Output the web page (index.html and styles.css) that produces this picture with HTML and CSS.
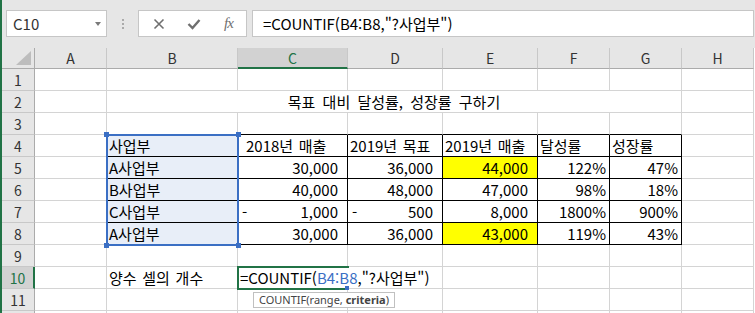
FILE: index.html
```html
<!DOCTYPE html>
<html lang="ko">
<head>
    <meta charset="UTF-8">
    <meta name="viewport" content="width=device-width, initial-scale=1.0">
    <title>COUNTIF</title>
    <link rel="stylesheet" href="styles.css">
</head>
<body>
<div class="app">
    <!-- formula bar -->
    <div class="formula-bar">
        <div class="name-box">
            <span>C10</span>
            <span class="caret"></span>
        </div>
        <div class="grip"><i></i><i></i><i></i></div>
        <div class="fx-buttons">
            <span class="fx-btn">
                <svg width="12" height="12" viewBox="0 0 12 12"><path d="M1.5 1.5 L10.5 10.5 M10.5 1.5 L1.5 10.5" stroke="#6f6f6f" stroke-width="1.6" fill="none"/></svg>
            </span>
            <span class="fx-btn">
                <svg width="14" height="12" viewBox="0 0 14 12"><path d="M1.5 6 L5.5 10 L12.5 2" stroke="#6f6f6f" stroke-width="2.4" fill="none"/></svg>
            </span>
            <span class="fx-btn fx-text">fx</span>
        </div>
        <div class="formula-input">=COUNTIF(B4:B8,"?사업부")</div>
    </div>

    <!-- sheet -->
    <div class="sheet">
        <div class="corner"><svg width="15" height="14" viewBox="0 0 15 14"><polygon points="15,0 15,14 0,14" fill="#bdbdbd"/></svg></div>
        <div class="hd">A</div>
        <div class="hd">B</div>
        <div class="hd hd-on">C</div>
        <div class="hd">D</div>
        <div class="hd">E</div>
        <div class="hd">F</div>
        <div class="hd">G</div>
        <div class="hd">H</div>

        <div class="rh">1</div>
        <div class="c"></div><div class="c"></div><div class="c"></div><div class="c"></div>
        <div class="c"></div><div class="c"></div><div class="c"></div><div class="c"></div>

        <div class="rh">2</div>
        <div class="c"></div>
        <div class="c title">목표 대비 달성률, 성장률 구하기</div>
        <div class="c"></div>

        <div class="rh">3</div>
        <div class="c"></div>
        <div class="c tt"></div><div class="c tt"></div><div class="c tt"></div>
        <div class="c tt"></div><div class="c tt"></div><div class="c tt"></div>
        <div class="c"></div>

        <div class="rh">4</div>
        <div class="c tl"></div>
        <div class="c t sel">사업부</div>
        <div class="c t indent">2018년 매출</div>
        <div class="c t">2019년 목표</div>
        <div class="c t">2019년 매출</div>
        <div class="c t">달성률</div>
        <div class="c t">성장률</div>
        <div class="c"></div>

        <div class="rh">5</div>
        <div class="c tl"></div>
        <div class="c t sel">A사업부</div>
        <div class="c t num">30,000</div>
        <div class="c t num">36,000</div>
        <div class="c t num hl">44,000</div>
        <div class="c t pct">122%</div>
        <div class="c t pct">47%</div>
        <div class="c"></div>

        <div class="rh">6</div>
        <div class="c tl"></div>
        <div class="c t sel">B사업부</div>
        <div class="c t num">40,000</div>
        <div class="c t num">48,000</div>
        <div class="c t num">47,000</div>
        <div class="c t pct">98%</div>
        <div class="c t pct">18%</div>
        <div class="c"></div>

        <div class="rh">7</div>
        <div class="c tl"></div>
        <div class="c t sel">C사업부</div>
        <div class="c t num acc"><span>-</span><span>1,000</span></div>
        <div class="c t num acc"><span>-</span><span>500</span></div>
        <div class="c t num">8,000</div>
        <div class="c t pct">1800%</div>
        <div class="c t pct">900%</div>
        <div class="c"></div>

        <div class="rh">8</div>
        <div class="c tl"></div>
        <div class="c t sel">A사업부</div>
        <div class="c t num">30,000</div>
        <div class="c t num">36,000</div>
        <div class="c t num hl">43,000</div>
        <div class="c t pct">119%</div>
        <div class="c t pct">43%</div>
        <div class="c"></div>

        <div class="rh">9</div>
        <div class="c"></div><div class="c"></div><div class="c"></div><div class="c"></div>
        <div class="c"></div><div class="c"></div><div class="c"></div><div class="c"></div>

        <div class="rh rh-on">10</div>
        <div class="c"></div>
        <div class="c">양수 셀의 개수</div>
        <div class="c editing">=COUNTIF(<span class="ref">B4:B8</span>,"?사업부")</div>
        <div class="c"></div><div class="c"></div><div class="c"></div><div class="c"></div><div class="c"></div>

        <div class="rh">11</div>
        <div class="c"></div><div class="c"></div><div class="c"></div><div class="c"></div>
        <div class="c"></div><div class="c"></div><div class="c"></div><div class="c"></div>

        <div class="rh"></div>
        <div class="c"></div><div class="c"></div><div class="c"></div><div class="c"></div>
        <div class="c"></div><div class="c"></div><div class="c"></div><div class="c"></div>

        <!-- overlays -->
        <div class="range">
            <i class="handle h-tl"></i><i class="handle h-tr"></i>
            <i class="handle h-bl"></i><i class="handle h-br"></i>
        </div>
        <div class="active"><i class="fill-handle"></i></div>
        <div class="tip">COUNTIF(range, <b>criteria</b>)</div>
    </div>
</div>
</body>
</html>
```

FILE: styles.css
```css
/* BODY */
body {
    margin: 0;
    font-family: "Noto Sans CJK KR", "Noto Sans", sans-serif;
    background-color: #fff;
}

.app {
    width: 753px;
    height: 313px;
    overflow: hidden;
    border-left: 2px solid #217346;
}

/* Formula bar */
.formula-bar {
    display: flex;
    align-items: flex-start;
    height: 48px;
    box-sizing: border-box;
    padding: 10px 1px 0 4px;
    background-color: #e6e6e6;
}
.name-box,
.fx-buttons,
.formula-input {
    height: 27px;
    box-sizing: border-box;
    border: 1px solid #c6c6c6;
    background-color: #fff;
    display: flex;
    align-items: center;
}
.name-box {
    width: 101px;
    padding-left: 6px;
    font-size: 15px;
    color: #333;
}
.caret {
    margin-left: auto;
    margin-right: 5px;
    border-left: 3.5px solid transparent;
    border-right: 3.5px solid transparent;
    border-top: 4px solid #7a7a7a;
}
.grip {
    width: 31px;
    height: 27px;
    display: flex;
    flex-direction: column;
    align-items: center;
    justify-content: center;
    gap: 2px;
}
.grip i {
    width: 2px;
    height: 2px;
    background-color: #aaa;
}
.fx-buttons {
    width: 109px;
    padding-left: 2px;
}
.fx-btn {
    width: 35px;
    display: flex;
    justify-content: center;
    align-items: center;
}
.fx-text {
    font-family: "Liberation Serif", serif;
    font-style: italic;
    font-size: 15px;
    color: #6f6f6f;
    letter-spacing: -1px;
}
.formula-input {
    flex: 1;
    margin-left: 5px;
    padding-left: 10px;
    font-size: 15px;
    color: #000;
    white-space: nowrap;
}

/* Sheet grid */
.sheet {
    position: relative;
    display: grid;
    grid-template-columns: 33px 72px 131px 110px 95px 95px 72px 72px 72px;
    grid-template-rows: 21px repeat(12, 22px);
}
.sheet > div {
    box-sizing: border-box;
}
.corner {
    background-color: #e6e6e6;
    border-right: 1px solid #ababab;
    border-bottom: 1px solid #ababab;
    display: flex;
    justify-content: flex-end;
    align-items: flex-end;
    padding: 0 3px 3px 0;
}
.hd {
    background-color: #e6e6e6;
    border-right: 1px solid #c8c8c8;
    border-bottom: 1px solid #ababab;
    text-align: center;
    font-size: 14px;
    line-height: 20px;
    color: #333;
}
.hd-on {
    background-color: #d2d2d2;
    border-bottom: 2px solid #217346;
    color: #217346;
}
.rh {
    background-color: #e6e6e6;
    border-right: 1px solid #ababab;
    border-bottom: 1px solid #c8c8c8;
    text-align: center;
    font-size: 14px;
    line-height: 22px;
    color: #333;
}
.rh-on {
    background-color: #d2d2d2;
    border-right: 2px solid #217346;
    color: #217346;
}

/* Cells */
.c {
    border-right: 1px solid #d4d4d4;
    border-bottom: 1px solid #d4d4d4;
    padding: 0 2px;
    font-size: 15px;
    line-height: 21px;
    white-space: nowrap;
    word-spacing: 1.5px;
    color: #000;
}
.title {
    grid-column: span 6;
    text-align: center;
    word-spacing: 3px;
}
.t {
    border-right-color: #000;
    border-bottom-color: #000;
}
.tl {
    border-right-color: #000;
}
.tt {
    border-bottom-color: #000;
}
.sel {
    background-color: #e8eef8;
}
.hl {
    background-color: #ffff00;
}
.indent {
    padding-left: 8px;
}
.num {
    text-align: right;
    padding-right: 9px;
}
.pct {
    text-align: right;
    padding-right: 3px;
}
.acc {
    display: flex;
    justify-content: space-between;
    padding-left: 4px;
}
.editing {
    border-right-color: transparent;
}
.ref {
    color: #3b6fc4;
}

/* Overlays */
.range {
    position: absolute;
    grid-column: 3 / 4;
    grid-row: 5 / 10;
    inset: -1px;
    border: 2px solid #3b6fc4;
}
.handle {
    position: absolute;
    width: 5px;
    height: 5px;
    background-color: #3b6fc4;
}
.h-tl { top: -4px; left: -4px; }
.h-tr { top: -4px; right: -4px; }
.h-bl { bottom: -4px; left: -4px; }
.h-br { bottom: -4px; right: -4px; }

.active {
    position: absolute;
    grid-column: 4 / 5;
    grid-row: 11 / 12;
    inset: -1px;
    border: 2px solid #217346;
    border-right: none;
}
.fill-handle {
    position: absolute;
    right: 0;
    bottom: -2px;
    width: 4px;
    height: 4px;
    background-color: #3b6fc4;
}

.tip {
    position: absolute;
    grid-column: 4 / 6;
    grid-row: 12 / 13;
    top: 3px;
    left: 15px;
    height: 16px;
    box-sizing: border-box;
    padding: 0 5px;
    border: 1px solid #c0c0c0;
    background-color: #fff;
    font-family: "Noto Sans", sans-serif;
    font-size: 11px;
    line-height: 14px;
    color: #444;
    white-space: nowrap;
}
```
